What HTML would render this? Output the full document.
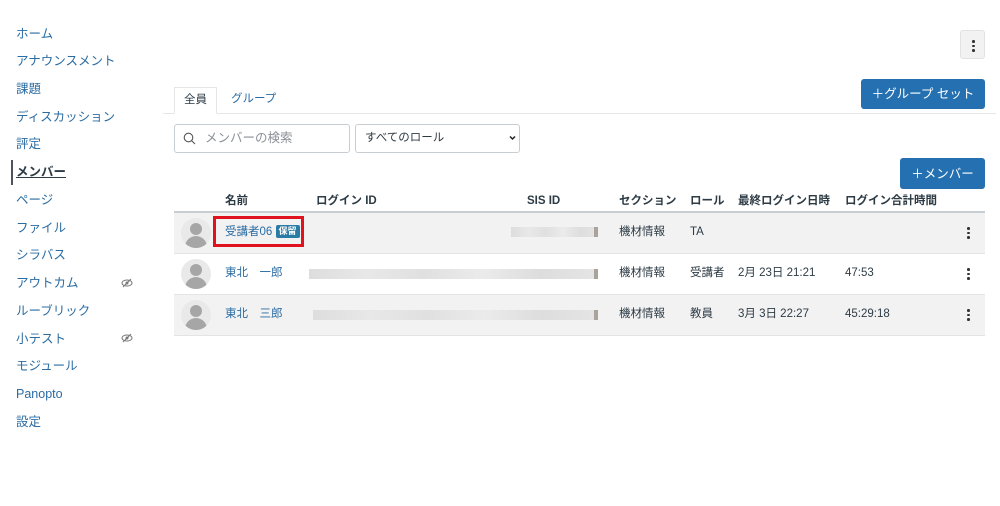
<!DOCTYPE html>
<html><head><meta charset="utf-8"><style>
*{box-sizing:border-box;margin:0;padding:0}
body{width:1000px;height:506px;background:#fff;font-family:"Liberation Sans","Noto Sans CJK JP",sans-serif;color:#2d3b45;position:relative;overflow:hidden;font-size:12px;line-height:16px}
div,span{line-height:16px}
.abs{position:absolute}
.nav{position:absolute;left:16px;color:#2b6ca3;font-size:12.5px}
.eye{position:absolute;left:121px;width:12px;height:12px}
.btn{position:absolute;background:#2570b0;color:#fff;border-radius:3px;font-size:12.5px;display:flex;align-items:center;justify-content:center}
.th{position:absolute;top:193px;font-weight:bold;font-size:11.5px;color:#2d3b45}
.row{position:absolute;left:174px;width:811px;height:41px;border-bottom:1px solid #e4e4e4}
.av{position:absolute;left:7px;top:5px;width:30px;height:30px;border-radius:50%;background:#e9e9e9;overflow:hidden}
.av:before{content:"";position:absolute;left:9px;top:5px;width:12px;height:12px;border-radius:50%;background:#a6a6a6}
.av:after{content:"";position:absolute;left:4px;top:18px;width:22px;height:16px;border-radius:11px 11px 0 0;background:#a6a6a6}
.td{position:absolute;top:11px;font-size:11.5px;color:#2d3b45;white-space:nowrap}
.nm{color:#2b6ca3}
.blur{position:absolute;height:10px;background:linear-gradient(90deg,#ddd,#e8e8e8 20%,#e0e0e0 40%,#ebebeb 60%,#ddd 80%,#e5e5e5);}
.blur:after{content:"";position:absolute;right:0;top:0;width:4px;height:100%;background:#a9a39c}
.keb{position:absolute;left:793px;top:14px;width:3px}
.keb i{display:block;width:2.5px;height:2.5px;background:#333;border-radius:50%;margin-bottom:2px}
</style></head><body>
<div class="nav" style="top:26px">ホーム</div>
<div class="nav" style="top:53px">アナウンスメント</div>
<div class="nav" style="top:81px">課題</div>
<div class="nav" style="top:109px">ディスカッション</div>
<div class="nav" style="top:136px">評定</div>
<div class="abs" style="left:11px;top:160px;width:2px;height:25px;background:#4a5560"></div>
<div class="nav" style="top:164px;color:#2d3b45;font-weight:bold;text-decoration:underline">メンバー</div>
<div class="nav" style="top:192px">ページ</div>
<div class="nav" style="top:220px">ファイル</div>
<div class="nav" style="top:247px">シラバス</div>
<div class="nav" style="top:275px">アウトカム</div>
<svg class="eye" style="top:277px" viewBox="0 0 12 12"><ellipse cx="6" cy="6" rx="5" ry="3" fill="none" stroke="#777" stroke-width="1"/><circle cx="6" cy="6" r="1.5" fill="#777"/><line x1="2" y1="10" x2="10" y2="2" stroke="#777"/></svg>
<div class="nav" style="top:303px">ルーブリック</div>
<div class="nav" style="top:331px">小テスト</div>
<svg class="eye" style="top:332px" viewBox="0 0 12 12"><ellipse cx="6" cy="6" rx="5" ry="3" fill="none" stroke="#777" stroke-width="1"/><circle cx="6" cy="6" r="1.5" fill="#777"/><line x1="2" y1="10" x2="10" y2="2" stroke="#777"/></svg>
<div class="nav" style="top:358px">モジュール</div>
<div class="nav" style="top:386px">Panopto</div>
<div class="nav" style="top:414px">設定</div>

<div class="abs" style="left:960px;top:30px;width:25px;height:29px;background:#f2f2f2;border:1px solid #e2e2e2;border-radius:3px"><div style="position:absolute;left:11px;top:9px;width:3px"><i style="display:block;width:2.5px;height:2.5px;background:#333;border-radius:50%;margin-bottom:2px"></i><i style="display:block;width:2.5px;height:2.5px;background:#333;border-radius:50%;margin-bottom:2px"></i><i style="display:block;width:2.5px;height:2.5px;background:#333;border-radius:50%"></i></div></div>
<div class="btn" style="left:861px;top:79px;width:124px;height:30px">＋グループ セット</div>

<div class="abs" style="left:163px;top:113px;width:833px;height:1px;background:#e6e6e6"></div>
<div class="abs" style="left:174px;top:87px;width:43px;height:27px;border:1px solid #e6e6e6;border-bottom:1px solid #fff;background:#fff;font-size:11.5px;text-align:center;padding-top:4px">全員</div>
<div class="abs" style="left:231px;top:91px;font-size:11.5px;color:#2b6ca3">グループ</div>

<div class="abs" style="left:174px;top:124px;width:176px;height:29px;border:1px solid #c7cdd1;border-radius:3px"></div>
<svg class="abs" style="left:183px;top:132px" width="13" height="13" viewBox="0 0 13 13"><circle cx="5.5" cy="5.5" r="4.3" fill="none" stroke="#555" stroke-width="1.1"/><line x1="8.6" y1="8.6" x2="12" y2="12" stroke="#555" stroke-width="1.1"/></svg>
<div class="abs" style="left:205px;top:130px;font-size:12.5px;color:#8a9097">メンバーの検索</div>
<div class="abs" style="left:355px;top:124px;width:165px;height:29px;border:1px solid #c7cdd1;border-radius:3px"></div>
<div class="abs" style="left:365px;top:130px;font-size:11.5px">すべてのロール</div>
<svg class="abs" style="left:509px;top:135px" width="7" height="6" viewBox="0 0 7 6"><path d="M1 1.5 L3.5 4 L6 1.5" fill="none" stroke="#222" stroke-width="1.5"/></svg>

<div class="btn" style="left:900px;top:158px;width:85px;height:31px">＋メンバー</div>

<div class="th" style="left:225px">名前</div>
<div class="th" style="left:316px">ログイン ID</div>
<div class="th" style="left:527px">SIS ID</div>
<div class="th" style="left:619px">セクション</div>
<div class="th" style="left:690px">ロール</div>
<div class="th" style="left:738px">最終ログイン日時</div>
<div class="th" style="left:845px">ログイン合計時間</div>
<div class="abs" style="left:174px;top:211px;width:811px;height:2px;background:#c7cdd1"></div>

<div class="row" style="top:213px;background:#f2f2f2">
<div class="av"></div>
<div class="abs" style="left:39px;top:3px;width:91px;height:31px;border:3px solid #e0121e"></div>
<div class="td nm" style="left:51px">受講者06 <span style="background:#2a7ba5;color:#fff;font-size:9px;font-weight:bold;padding:0 3px;border-radius:2px;line-height:13px;display:inline-block;vertical-align:1px">保留</span></div>
<div class="blur" style="left:337px;top:14px;width:87px"></div>
<div class="td" style="left:445px">機材情報</div>
<div class="td" style="left:516px">TA</div>
<div class="keb"><i></i><i></i><i></i></div>
</div>
<div class="row" style="top:254px;background:#fff">
<div class="av"></div>
<div class="td nm" style="left:51px">東北　一郎</div>
<div class="blur" style="left:135px;top:15px;width:289px"></div>
<div class="td" style="left:445px">機材情報</div>
<div class="td" style="left:516px">受講者</div>
<div class="td" style="left:564px">2月 23日 21:21</div>
<div class="td" style="left:671px">47:53</div>
<div class="keb"><i></i><i></i><i></i></div>
</div>
<div class="row" style="top:295px;background:#f2f2f2">
<div class="av"></div>
<div class="td nm" style="left:51px">東北　三郎</div>
<div class="blur" style="left:139px;top:15px;width:285px"></div>
<div class="td" style="left:445px">機材情報</div>
<div class="td" style="left:516px">教員</div>
<div class="td" style="left:564px">3月 3日 22:27</div>
<div class="td" style="left:671px">45:29:18</div>
<div class="keb"><i></i><i></i><i></i></div>
</div>
</body></html>
